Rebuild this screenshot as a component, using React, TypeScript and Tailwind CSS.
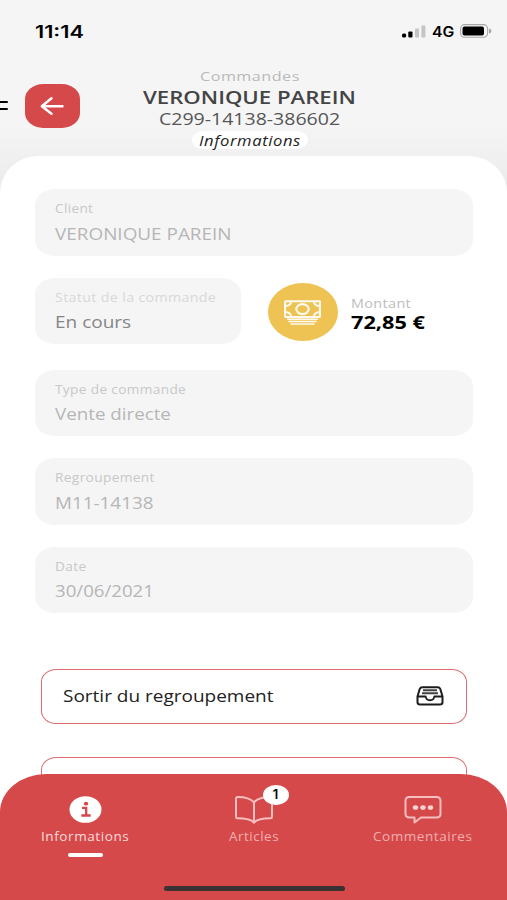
import React, { useLayoutEffect, useRef, useState } from "react";

interface WideTextProps {
  width: number;
  className?: string;
  children: React.ReactNode;
}

// Wide lettering: the text is stretched horizontally to fill the given width
const WideText = ({ width, className = "", children }: WideTextProps) => {
  const ref = useRef<HTMLSpanElement>(null);
  const [scale, setScale] = useState(1);

  useLayoutEffect(() => {
    if (ref.current) setScale(width / ref.current.offsetWidth);
  }, [width]);

  return (
    <div className={className} style={{ width }}>
      <span
        ref={ref}
        className="inline-block origin-left whitespace-nowrap align-top"
        style={{ transform: `scaleX(${scale})` }}
      >
        {children}
      </span>
    </div>
  );
};

interface FieldProps {
  label: string;
  labelWidth: number;
  value: string;
  valueWidth: number;
  className?: string;
  labelColor?: string;
  valueColor?: string;
}

const Field = ({
  label,
  labelWidth,
  value,
  valueWidth,
  className = "",
  labelColor = "text-[#c8c8c8]",
  valueColor = "text-[#b6b6b6]",
}: FieldProps) => (
  <div className={`h-[66.5px] rounded-[20px/16px] bg-[#f5f5f5] pt-[12px] pl-[20px] ${className}`}>
    <WideText width={labelWidth} className={`text-[12px] leading-4 tracking-[0.3px] ${labelColor}`}>
      {label}
    </WideText>
    <WideText width={valueWidth} className={`mt-[4.5px] text-[16px] leading-6 ${valueColor}`}>
      {value}
    </WideText>
  </div>
);

const StatusBar = () => (
  <div className="flex h-[62px] items-center justify-between pr-[15px] pl-[35px] font-[Inter,sans-serif] font-semibold text-black">
    <WideText width={48.5} className="pt-px text-[17px] leading-6">
      11:14
    </WideText>
    <div className="flex items-center">
      <svg width="24" height="13" viewBox="0 0 24 13">
        <rect x="0" y="8.5" width="4.2" height="4" rx="1.5" />
        <rect x="6.3" y="6.5" width="4.2" height="6" rx="1" />
        <rect x="13" y="3.5" width="4" height="9" rx="1" fill="#c4c4c4" />
        <rect x="19.4" y="0.5" width="4" height="12" rx="1" fill="#c4c4c4" />
      </svg>
      <WideText width={22.5} className="ml-[5.5px] pt-px text-[14px] leading-5">
        4G
      </WideText>
      <svg className="ml-[6px]" width="32" height="14" viewBox="0 0 32 14">
        <rect x="0.6" y="0.6" width="27" height="12.6" rx="4" fill="none" stroke="#a8a8a8" strokeWidth="1.1" />
        <rect x="2.5" y="2.4" width="21.5" height="9" rx="2" />
        <path d="M29 4.6c1.9.5 2.4 1.4 2.4 2.4s-.5 1.9-2.4 2.4z" fill="#a8a8a8" />
      </svg>
    </div>
  </div>
);

const Header = () => (
  <header className="flex h-[94px] items-start">
    <div className="mt-[39px] w-[25px]">
      <div className="h-[2px] w-[7.5px] rounded-r bg-black" />
      <div className="mt-[5px] h-[2px] w-[7.5px] rounded-r bg-black" />
    </div>
    <button className="mt-[22px] flex h-[44px] w-[54.5px] items-center justify-center rounded-[18px/15px] bg-[#d6494b]">
      <svg
        width="24"
        height="20"
        viewBox="0 0 24 20"
        fill="none"
        stroke="#fff"
        strokeWidth="2.4"
        strokeLinecap="round"
        strokeLinejoin="round"
      >
        <path d="M22.5 10.2H2M11.5 2.2L1.8 10.2l9.7 7.6" />
      </svg>
    </button>
    <div className="ml-[62px] flex w-[216px] flex-col items-center">
      <WideText width={99.5} className="mt-[5px] text-[13px] leading-[18px] tracking-[0.4px] text-[#b9b9b9]">
        Commandes
      </WideText>
      <WideText width={213} className="text-[18px] leading-6 font-semibold text-[#444]">
        VERONIQUE PAREIN
      </WideText>
      <WideText width={180.5} className="-mt-[2px] text-[16px] leading-6 text-[#555]">
        C299-14138-386602
      </WideText>
      <div className="flex h-[18px] w-[116px] items-center justify-center rounded-[11px/9px] bg-white">
        <WideText width={102} className="text-[14px] leading-[19px] tracking-[0.5px] text-[#222] italic">
          Informations
        </WideText>
      </div>
    </div>
  </header>
);

const MoneyIcon = () => (
  <svg className="mt-px" width="37" height="25" viewBox="0 0 37 25" fill="none" stroke="#fffaf0">
    <rect x="1" y="1.2" width="35" height="15.8" rx="0.8" strokeWidth="2.1" />
    <ellipse cx="18.5" cy="9.1" rx="6.2" ry="5" strokeWidth="2.1" />
    <path
      d="M1 6.2C5 6 7 4 7.5 1M36 6.2C32 6 30 4 29.5 1M1 12c4 .2 6 2 6.5 5M36 12c-4 .2-6 2-6.5 5"
      strokeWidth="1.8"
    />
    <path d="M3 19.3h31M4.5 21.6h28M6.5 23.9h24" strokeWidth="1.5" />
  </svg>
);

const InboxIcon = () => (
  <svg width="28" height="20" viewBox="0 0 28 20" fill="none" stroke="#1c1c1c" strokeLinejoin="round">
    <path
      d="M1.5 10.5L3.700 3Q4.300 1.200 6.500 1.200h15q2.200 0 2.800 1.800l2.200 7.500v5.700q0 2.300-2.700 2.300H4.200q-2.700 0-2.700-2.300z"
      strokeWidth="2"
    />
    <path d="M1.5 10.5h8.200c.6 5 8 5 8.600 0h8.200" strokeWidth="1.8" />
    <path d="M7 4.3h14M6 7.2h16" stroke="#444" strokeWidth="1.9" />
  </svg>
);

const InfoIcon = () => (
  <svg width="33" height="27" viewBox="0 0 33 27">
    <ellipse cx="16.5" cy="13.5" rx="16" ry="13.3" fill="#fff" />
    <ellipse cx="17" cy="7.7" rx="2.2" ry="1.9" fill="#d6494b" />
    <path d="M13 11.9h4.2v7.3M12.3 19.5h9.4" fill="none" stroke="#d6494b" strokeWidth="2.3" />
  </svg>
);

const BookIcon = () => (
  <svg
    width="38"
    height="28"
    viewBox="0 0 38 28"
    fill="none"
    stroke="#f6bebe"
    strokeWidth="2"
    strokeLinecap="round"
    strokeLinejoin="round"
  >
    <path d="M19 6.3C15.5 2.3 9.5 1 2.5 1Q1 1 1 2.5v18.2q0 1.500 1.500 1.500C10 22.2 16 23 19 26.500" />
    <path d="M19 6.3C22.5 2.3 28.5 1 35.5 1Q37 1 37 2.5v18.2q0 1.500-1.500 1.500C28 22.2 22 23 19 26.500z" />
  </svg>
);

const CommentIcon = () => (
  <svg width="38" height="28" viewBox="0 0 38 28" fill="none" stroke="#f6bebe" strokeWidth="2" strokeLinejoin="round">
    <path d="M5.5 1h27Q36.5 1 36.5 4.8v13q0 3.700-4 3.700H17L10.5 26.5v-5h-5q-4 0-4-3.700v-13Q1.5 1 5.5 1z" />
    <g fill="#f9d2d2" stroke="none">
      <ellipse cx="11.5" cy="11.5" rx="2.7" ry="2.3" />
      <ellipse cx="19" cy="11.5" rx="2.7" ry="2.3" />
      <ellipse cx="26.5" cy="11.5" rx="2.7" ry="2.3" />
    </g>
  </svg>
);

const BottomNav = () => (
  <nav className="absolute inset-x-0 bottom-0 h-[126px] rounded-t-[46px_38px] bg-[#d6494b]">
    <div className="grid grid-cols-3 pt-[21px]">
      <div className="flex flex-col items-center pl-px">
        <div className="flex h-[29px] items-center">
          <InfoIcon />
        </div>
        <WideText width={88} className="mt-[4.5px] text-[12px] leading-4 tracking-[0.5px] text-[#fbdcdc]">
          Informations
        </WideText>
        <div className="mt-[8.5px] h-[4px] w-[35px] rounded-full bg-white" />
      </div>
      <div className="flex flex-col items-center">
        <div className="relative flex h-[29px] items-center">
          <BookIcon />
          <span className="absolute -top-[10.5px] left-[28px] flex h-[20.5px] w-[26px] items-center justify-center rounded-[50%] bg-white font-[Inter,sans-serif] text-[13px] font-semibold text-black">
            1
          </span>
        </div>
        <WideText width={50} className="mt-[4.5px] text-[12px] leading-4 tracking-[0.5px] text-[#f0afaf]">
          Articles
        </WideText>
      </div>
      <div className="flex flex-col items-center">
        <div className="flex h-[29px] items-center">
          <CommentIcon />
        </div>
        <WideText width={99} className="mt-[4.5px] text-[12px] leading-4 tracking-[0.5px] text-[#f0afaf]">
          Commentaires
        </WideText>
      </div>
    </div>
    {/* home indicator */}
    <div className="absolute bottom-[9px] left-[164px] h-[5.5px] w-[181px] rounded-full bg-[#3a3132]" />
  </nav>
);

const App = () => {
  return (
    <div className="relative h-[900px] w-[507px] overflow-hidden bg-gradient-to-b from-[#f5f5f5] from-[14%] to-[#ebebeb] to-[21%] font-['Open_Sans',sans-serif]">
      <StatusBar />
      <Header />
      <main className="h-[744px] rounded-t-[38px_37px] bg-white pt-[33px] pr-[34px] pl-[34.5px]">
        <Field label="Client" labelWidth={38.5} value="VERONIQUE PAREIN" valueWidth={176} />
        <div className="mt-[22px] flex">
          <Field
            label="Statut de la commande"
            labelWidth={161}
            value="En cours"
            valueWidth={76}
            className="w-[206px]"
            labelColor="text-[#d8d8d8]"
            valueColor="text-[#858585]"
          />
          <div className="mt-[5px] ml-[27px] flex h-[58px] w-[70.5px] items-center justify-center rounded-[50%] bg-[#eec354]">
            <MoneyIcon />
          </div>
          <div className="mt-[18.5px] ml-[13px]">
            <WideText width={60} className="text-[12.5px] leading-4 tracking-[0.3px] text-[#bdbdbd]">
              Montant
            </WideText>
            <WideText width={74} className="-mt-[1.5px] text-[17px] leading-6 font-bold text-black">
              72,85 €
            </WideText>
          </div>
        </div>
        <div className="mt-[25.5px] flex flex-col gap-[22px]">
          <Field label="Type de commande" labelWidth={131} value="Vente directe" valueWidth={116} />
          <Field label="Regroupement" labelWidth={99.5} value="M11-14138" valueWidth={99} />
          <Field label="Date" labelWidth={32} value="30/06/2021" valueWidth={99} />
        </div>
        <div className="mt-[55.5px] flex flex-col gap-[33px] pr-[6.5px] pl-[6.5px]">
          <button className="flex h-[55.5px] items-center justify-between rounded-[15px/13px] border-[1.5px] border-[#dc6c6e] bg-white pr-[21.5px] pb-px pl-[20.5px] text-left">
            <WideText width={210} className="text-[16px] leading-6 text-[#222]">
              Sortir du regroupement
            </WideText>
            <InboxIcon />
          </button>
          <div className="h-[56px] rounded-[15px/13px] border-[1.5px] border-[#dc6c6e] bg-white" />
        </div>
      </main>
      <BottomNav />
    </div>
  );
};

export default App;
